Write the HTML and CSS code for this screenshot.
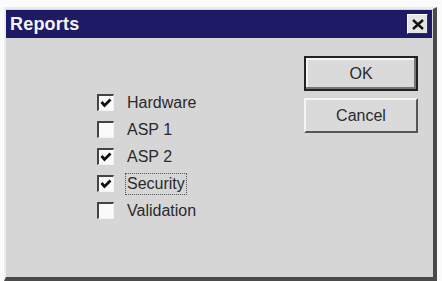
FILE: index.html
```html
<!DOCTYPE html>
<html>
<head>
<meta charset="utf-8">
<link rel="stylesheet" href="styles.css">
</head>
<body>
<div class="window">
  <div class="titlebar">
    <span class="title">Reports</span>
    <span class="close"><svg width="12" height="11" viewBox="0 0 12 11"><path d="M1 1 L11 10 M11 1 L1 10" stroke="#111" stroke-width="2.4"/></svg></span>
  </div>
  <div class="content">
    <div class="list">
      <div class="row"><span class="box"><svg class="tick" width="12" height="12" viewBox="0 0 12 12"><path d="M1.5 5 L4.5 8.5 L10.5 2.5" fill="none" stroke="#111" stroke-width="2.8"/></svg></span><span class="label">Hardware</span></div>
      <div class="row"><span class="box"></span><span class="label">ASP 1</span></div>
      <div class="row"><span class="box"><svg class="tick" width="12" height="12" viewBox="0 0 12 12"><path d="M1.5 5 L4.5 8.5 L10.5 2.5" fill="none" stroke="#111" stroke-width="2.8"/></svg></span><span class="label">ASP 2</span></div>
      <div class="row"><span class="box"><svg class="tick" width="12" height="12" viewBox="0 0 12 12"><path d="M1.5 5 L4.5 8.5 L10.5 2.5" fill="none" stroke="#111" stroke-width="2.8"/></svg></span><span class="label focus">Security</span></div>
      <div class="row"><span class="box"></span><span class="label">Validation</span></div>
    </div>
    <div class="buttons">
      <div class="btn default">OK</div>
      <div class="btn">Cancel</div>
    </div>
  </div>
</div>
</body>
</html>
```

FILE: styles.css
```css
html, body {
  margin: 0;
  padding: 0;
  background: #fbfbfb;
}
body {
  font-family: "Liberation Sans", Arial, sans-serif;
  color: #2a2a2a;
}
.window {
  box-sizing: border-box;
  margin: 7px 5px 0 4px;
  height: 274px;
  background: #d6d6d6;
  border-top: 2px solid #ececec;
  border-left: 2px solid #ececec;
  border-right: 4px solid #4a4a4a;
  border-bottom: 4px solid #4a4a4a;
  padding: 1px 1px 0 0;
  display: flex;
  flex-direction: column;
}
.titlebar {
  height: 28px;
  background: #1f1a66;
  display: flex;
  align-items: center;
  justify-content: space-between;
  padding: 0 4px 0 4px;
}
.title {
  color: #f4f4f4;
  font-weight: bold;
  font-size: 18px;
  letter-spacing: 0.2px;
}
.close {
  width: 19px;
  height: 18px;
  background: #e4e4e4;
  border-top: 1px solid #fff;
  border-left: 1px solid #fff;
  border-right: 1px solid #333;
  border-bottom: 1px solid #333;
  display: flex;
  align-items: center;
  justify-content: center;
}
.content {
  flex: 1;
  display: flex;
  justify-content: space-between;
}
.list {
  padding: 51px 0 0 91px;
  display: flex;
  flex-direction: column;
}
.row {
  height: 27px;
  display: flex;
  align-items: center;
}
.box {
  box-sizing: border-box;
  width: 17px;
  height: 17px;
  background: #fafafa;
  border-top: 2px solid #444;
  border-left: 2px solid #444;
  border-right: 1px solid #f2f2f2;
  border-bottom: 1px solid #f2f2f2;
  margin-right: 11px;
  display: flex;
  align-items: center;
  justify-content: center;
}
.label {
  font-size: 16px;
  padding: 1px 1px;
  border: 1px dotted transparent;
}
.label.focus {
  border-color: #555;
}
.buttons {
  padding: 18px 14px 0 0;
  display: flex;
  flex-direction: column;
  gap: 7px;
}
.btn {
  box-sizing: border-box;
  width: 114px;
  height: 35px;
  background: #dadada;
  border-top: 2px solid #f4f4f4;
  border-left: 2px solid #f4f4f4;
  border-right: 2px solid #555;
  border-bottom: 2px solid #555;
  display: flex;
  align-items: center;
  justify-content: center;
  font-size: 16px;
}
.btn.default {
  border: 2px solid #222;
  box-shadow: inset -2px -2px 0 #777, inset 2px 2px 0 #f4f4f4;
}
```
